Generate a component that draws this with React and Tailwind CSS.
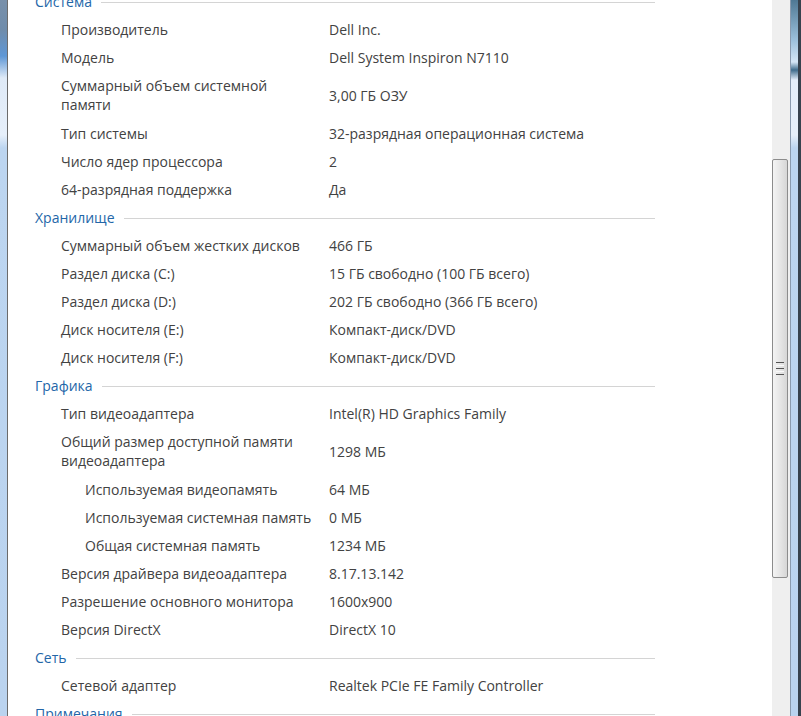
import React from "react";

const sections = [
  {
    title: "Система",
    rows: [
      ["Производитель", "Dell Inc."],
      ["Модель", "Dell System Inspiron N7110"],
      [["Суммарный объем системной", "памяти"], "3,00 ГБ ОЗУ"],
      ["Тип системы", "32-разрядная операционная система"],
      ["Число ядер процессора", "2"],
      ["64-разрядная поддержка", "Да"],
    ],
  },
  {
    title: "Хранилище",
    rows: [
      ["Суммарный объем жестких дисков", "466 ГБ"],
      ["Раздел диска (C:)", "15 ГБ свободно (100 ГБ всего)"],
      ["Раздел диска (D:)", "202 ГБ свободно (366 ГБ всего)"],
      ["Диск носителя (E:)", "Компакт-диск/DVD"],
      ["Диск носителя (F:)", "Компакт-диск/DVD"],
    ],
  },
  {
    title: "Графика",
    rows: [
      ["Тип видеоадаптера", "Intel(R) HD Graphics Family"],
      [["Общий размер доступной памяти", "видеоадаптера"], "1298 МБ"],
      ["Используемая видеопамять", "64 МБ", true],
      ["Используемая системная память", "0 МБ", true],
      ["Общая системная память", "1234 МБ", true],
      ["Версия драйвера видеоадаптера", "8.17.13.142"],
      ["Разрешение основного монитора", "1600x900"],
      ["Версия DirectX", "DirectX 10"],
    ],
  },
  {
    title: "Сеть",
    rows: [["Сетевой адаптер", "Realtek PCIe FE Family Controller"]],
  },
  { title: "Примечания", rows: [] },
];

function Header({ title }) {
  return (
    <div className="flex h-[28px] w-[647px] items-center pl-[27px]">
      <span className="whitespace-nowrap text-[#2366a8]">{title}</span>
      <div className="ml-[9px] mt-[2px] h-px flex-1 bg-[#d4d4d4]" />
    </div>
  );
}

function Row({ label, value, sub }) {
  const multi = Array.isArray(label);
  return (
    <div className={`flex items-center ${multi ? "h-[48px]" : "h-[28px]"}`}>
      <div
        className={`w-[321px] shrink-0 whitespace-nowrap leading-[19px] ${
          sub ? "pl-[77px]" : "pl-[53px]"
        }`}
      >
        {multi ? (
          <>
            <div>{label[0]}</div>
            <div>{label[1]}</div>
          </>
        ) : (
          label
        )}
      </div>
      <div className="whitespace-nowrap">{value}</div>
    </div>
  );
}

export default function App() {
  return (
    <div
      className="flex h-[716px] w-[801px] overflow-hidden bg-white text-[14px] text-[#424242]"
      style={{ fontFamily: '"Open Sans", "Noto Sans", sans-serif' }}
    >
      <div className="w-[7px] shrink-0 bg-[linear-gradient(to_bottom,#7890aa_0px,#6f8cab_30px,#5e97d6_56px,#dfeaf7_78px,#e6effa_135px,#bcd5f0_148px,#bad3ef_100%)]" />
      <div className="w-px shrink-0 bg-[#6b6b6b]" />
      <div className="flex-1 overflow-hidden">
        <div className="-mt-[13px]">
          {sections.map((s) => (
            <div key={s.title}>
              <Header title={s.title} />
              {s.rows.map((r) => (
                <Row key={Array.isArray(r[0]) ? r[0][0] : r[0]} label={r[0]} value={r[1]} sub={r[2]} />
              ))}
            </div>
          ))}
        </div>
      </div>
      <div className="relative w-[18px] shrink-0 bg-[#efefef]">
        <div className="absolute left-0 top-[159px] flex h-[419px] w-[16px] items-center justify-center rounded-[2px] border border-[#8c8c8c] bg-[linear-gradient(to_right,#f4f4f4,#e6e6e6_50%,#d6d6d6)]">
          <div className="flex flex-col gap-[2px]">
            <div className="h-px w-[8px] bg-[#555]" />
            <div className="h-px w-[8px] bg-[#fafafa]" />
            <div className="h-px w-[8px] bg-[#555]" />
            <div className="h-px w-[8px] bg-[#fafafa]" />
            <div className="h-px w-[8px] bg-[#555]" />
          </div>
        </div>
      </div>
      <div className="w-px shrink-0 bg-[#8a9aae]" />
      <div className="w-[7px] shrink-0 bg-[linear-gradient(to_bottom,#4f7894_0px,#9cc0dc_40px,#d5e6f6_62px,#3f6c8c_70px,#e4eefa_80px,#e6effa_135px,#bcd5f0_148px,#bad3ef_100%)]" />
      <div className="w-[3px] shrink-0 bg-[#37424e]" />
    </div>
  );
}
